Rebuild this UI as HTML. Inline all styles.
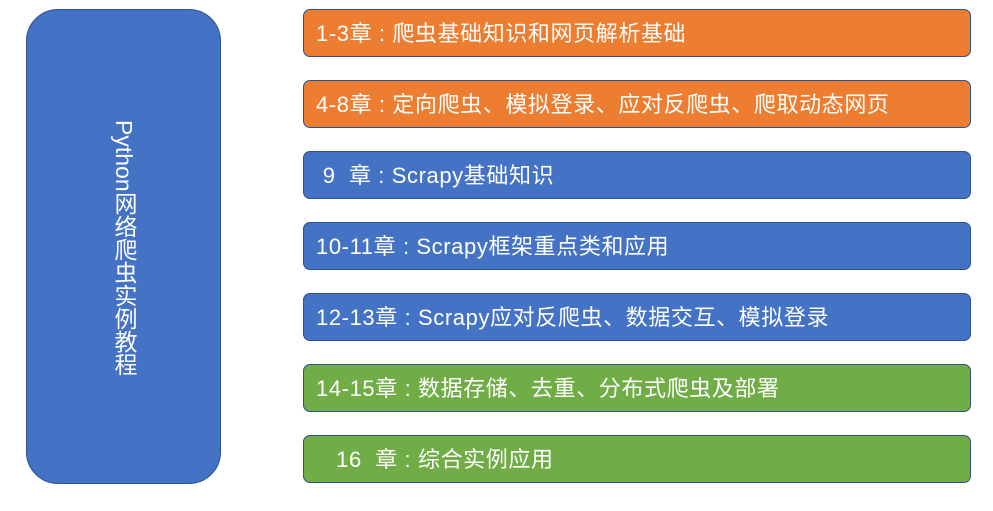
<!DOCTYPE html>
<html><head><meta charset="utf-8"><style>
body{margin:0;width:993px;height:511px;background:#fff;position:relative;overflow:hidden;font-family:"Liberation Sans","Noto Sans CJK SC",sans-serif;}
.left{position:absolute;left:26px;top:9px;width:193px;height:473px;background:#4472C4;border:1px solid #2F528F;border-radius:32px;}
.vt{position:absolute;left:112px;top:120px;writing-mode:vertical-rl;color:#fff;font-size:23px;line-height:24px;white-space:nowrap;}
.bar{position:absolute;left:303px;width:654px;height:46px;border:1px solid #2F528F;border-radius:7px;color:#fff;font-size:22px;line-height:47px;padding-left:12px;white-space:pre;letter-spacing:0.6px;}
.o{background:#ED7D31}.b{background:#4472C4}.g{background:#70AD47}
</style></head><body>
<div class="left"></div>
<div class="vt">Python网络爬虫实例教程</div>
<div class="bar o" style="top:9px">1-3章 : 爬虫基础知识和网页解析基础</div>
<div class="bar o" style="top:80px">4-8章 : 定向爬虫、模拟登录、应对反爬虫、爬取动态网页</div>
<div class="bar b" style="top:151px"> 9  章 : Scrapy基础知识</div>
<div class="bar b" style="top:222px">10-11章 : Scrapy框架重点类和应用</div>
<div class="bar b" style="top:293px">12-13章 : Scrapy应对反爬虫、数据交互、模拟登录</div>
<div class="bar g" style="top:364px">14-15章 : 数据存储、去重、分布式爬虫及部署</div>
<div class="bar g" style="top:435px">   16  章 : 综合实例应用</div>
</body></html>
